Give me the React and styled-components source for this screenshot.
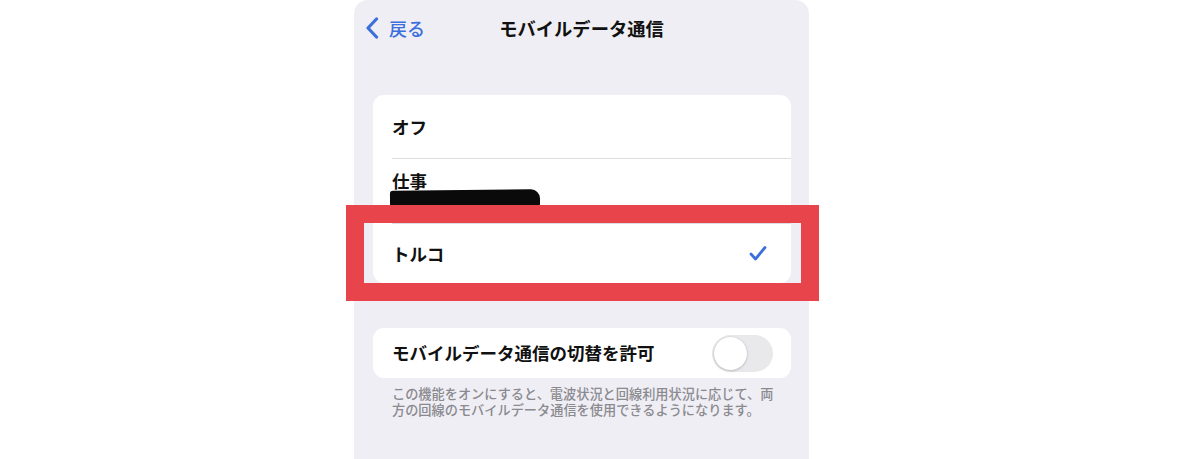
import React from 'react';
import styled, { createGlobalStyle } from 'styled-components';

const GlobalStyle = createGlobalStyle`
  html, body {
    margin: 0;
    padding: 0;
    background: #ffffff;
    height: 459px;
    overflow: hidden;
  }
  body {
    font-family: "Noto Sans CJK JP", "Noto Sans", sans-serif;
    -webkit-font-smoothing: antialiased;
  }
`;

const Page = styled.div`
  display: flex;
  padding-left: 354px;
`;

const Panel = styled.div`
  width: 455px;
  height: 480px;
  background: #efeef4;
  border-radius: 14px 14px 0 0;
  padding: 0 18px 0 19px;
  box-sizing: border-box;
`;

const NavBar = styled.div`
  position: relative;
  height: 56px;
  display: flex;
  align-items: center;
  justify-content: center;
  margin: 0 -18px 0 -19px;
`;

const BackButton = styled.div`
  position: absolute;
  left: 11px;
  top: 0;
  height: 56px;
  display: flex;
  align-items: center;
  gap: 10px;
  color: #3b6fdc;
  font-size: 18px;
  font-weight: 500;
`;

const Title = styled.div`
  font-size: 18.3px;
  font-weight: 700;
  color: #111;
`;

const ListWrap = styled.div`
  position: relative;
  margin-top: 39px;
`;

const Card = styled.div`
  background: #fff;
  border-radius: 11px;
  overflow: hidden;
`;

const Row = styled.div`
  display: flex;
  align-items: ${p => (p.top ? 'flex-start' : 'center')};
  justify-content: space-between;
  height: ${p => p.h}px;
  padding: ${p => (p.top ? '12px' : '0')} 18px 0 ${p => (p.divider ? '0' : '19px')};
  box-sizing: border-box;
  border-top: ${p => (p.divider ? '1px solid #dedde2' : 'none')};
  margin-left: ${p => (p.divider ? '19px' : '0')};
`;

const Label = styled.div`
  display: flex;
  flex-direction: column;
  font-size: 17.5px;
  font-weight: 700;
  color: #111;
  line-height: 20px;
`;

const Redacted = styled.div`
  width: 150px;
  height: 18px;
  margin-top: -1px;
  margin-left: -2px;
  background: #0a0a0a;
  border-radius: 3px 9px 4px 2px;
  transform: rotate(-0.6deg);
`;

const Highlight = styled.div`
  position: absolute;
  left: -27px;
  top: 110px;
  width: 473px;
  height: 96px;
  border: 18px solid #e8444b;
  box-sizing: border-box;
  pointer-events: none;
`;

const SecondCard = styled(Card)`
  margin-top: 45px;
`;

const Toggle = styled.div`
  width: 61px;
  height: 37px;
  border-radius: 19px;
  background: #e9e9eb;
  position: relative;
  &::after {
    content: '';
    position: absolute;
    left: 2px;
    top: 2px;
    width: 33px;
    height: 33px;
    border-radius: 50%;
    background: #fff;
    box-shadow: 0 1px 3px rgba(0, 0, 0, 0.18), 0 0 0 0.5px rgba(0, 0, 0, 0.06);
  }
`;

const Footer = styled.div`
  padding: 8px 19px 0 19px;
  color: #8a8a8f;
  font-weight: 500;
`;

const FooterLine = styled.div`
  font-size: 13.2px;
  line-height: 16px;
  height: 16px;
  white-space: nowrap;
`;

const CheckWrap = styled.div`
  display: flex;
  margin-right: 6px;
`;

const Chevron = () => (
  <svg width="14" height="22" viewBox="0 0 14 22">
    <path d="M11.5 2 L3 11 L11.5 20" fill="none" stroke="#3b6fdc" strokeWidth="3.2" strokeLinecap="round" strokeLinejoin="round" />
  </svg>
);

const Check = () => (
  <CheckWrap>
    <svg width="18" height="17" viewBox="0 0 18 17">
      <path d="M2 9 L6.5 14 L16 2.5" fill="none" stroke="#3b6fdc" strokeWidth="2.8" strokeLinecap="round" strokeLinejoin="round" />
    </svg>
  </CheckWrap>
);

export default function App() {
  return (
    <Page>
      <GlobalStyle />
      <Panel>
        <NavBar>
          <BackButton>
            <Chevron />
            <span>戻る</span>
          </BackButton>
          <Title>モバイルデータ通信</Title>
        </NavBar>

        <ListWrap>
          <Card>
            <Row h={63}>
              <Label>オフ</Label>
            </Row>
            <Row h={65} divider top>
              <Label>
                仕事
                <Redacted />
              </Label>
            </Row>
            <Row h={60} divider>
              <Label>トルコ</Label>
              <Check />
            </Row>
          </Card>
          <Highlight />
        </ListWrap>

        <SecondCard>
          <Row h={50}>
            <Label>モバイルデータ通信の切替を許可</Label>
            <Toggle />
          </Row>
        </SecondCard>
        <Footer>
          <FooterLine>この機能をオンにすると、電波状況と回線利用状況に応じて、両</FooterLine>
          <FooterLine>方の回線のモバイルデータ通信を使用できるようになります。</FooterLine>
        </Footer>
      </Panel>
    </Page>
  );
}
